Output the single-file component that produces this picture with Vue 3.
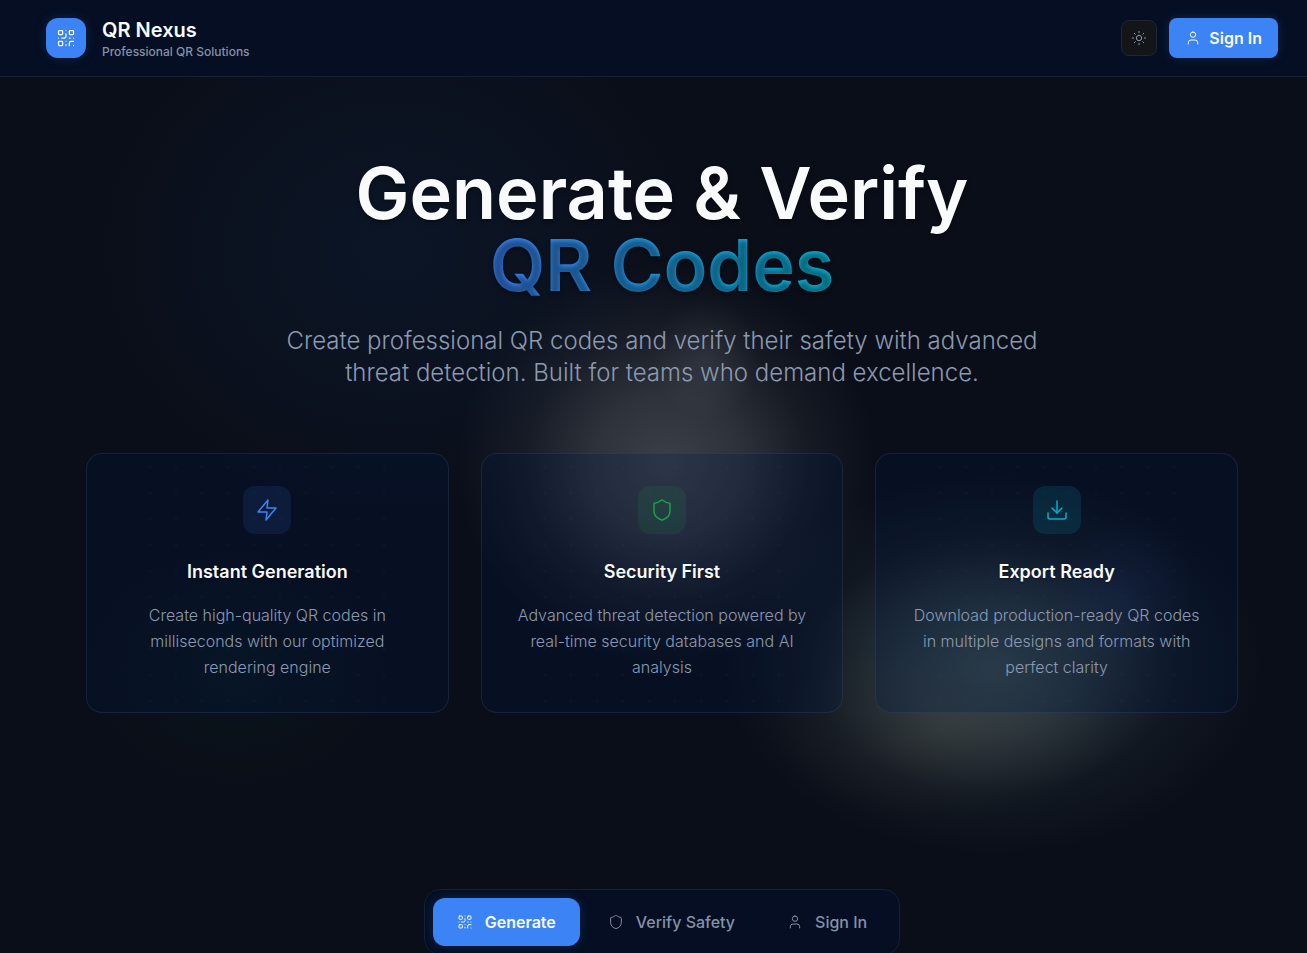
<script setup>
import { ref } from 'vue'

const active = ref('generate')

const tabs = [
  { id: 'generate', label: 'Generate', icon: 'qr' },
  { id: 'verify', label: 'Verify Safety', icon: 'shield' },
  { id: 'account', label: 'Sign In', icon: 'user' },
]

const features = [
  {
    tone: 'blue',
    icon: 'zap',
    title: 'Instant Generation',
    text: 'Create high-quality QR codes in milliseconds with our optimized rendering engine',
  },
  {
    tone: 'green',
    icon: 'shield',
    title: 'Security First',
    text: 'Advanced threat detection powered by real-time security databases and AI analysis',
  },
  {
    tone: 'cyan',
    icon: 'download',
    title: 'Export Ready',
    text: 'Download production-ready QR codes in multiple designs and formats with perfect clarity',
  },
]

const icons = {
  qr: [
    'M4 3h3a1 1 0 0 1 1 1v3a1 1 0 0 1-1 1H4a1 1 0 0 1-1-1V4a1 1 0 0 1 1-1z',
    'M17 3h3a1 1 0 0 1 1 1v3a1 1 0 0 1-1 1h-3a1 1 0 0 1-1-1V4a1 1 0 0 1 1-1z',
    'M4 16h3a1 1 0 0 1 1 1v3a1 1 0 0 1-1 1H4a1 1 0 0 1-1-1v-3a1 1 0 0 1 1-1z',
    'M21 16h-3a2 2 0 0 0-2 2v3',
    'M21 21v.01',
    'M12 7v3a2 2 0 0 1-2 2H7',
    'M3 12h.01',
    'M12 3h.01',
    'M12 16v.01',
    'M16 12h1',
    'M21 12v.01',
    'M12 21v-1',
  ],
  shield: [
    'M20 13c0 5-3.5 7.5-7.66 8.95a1 1 0 0 1-.67-.01C7.5 20.5 4 18 4 13V6a1 1 0 0 1 1-1c2 0 4.5-1.2 6.24-2.72a1.17 1.17 0 0 1 1.52 0C14.51 3.81 17 5 19 5a1 1 0 0 1 1 1z',
  ],
  user: ['M19 21v-2a4 4 0 0 0-4-4H9a4 4 0 0 0-4 4v2', 'M12 3a4 4 0 1 1 0 8a4 4 0 0 1 0-8z'],
  zap: ['M13 2L3 14h9l-1 8l10-12h-9l1-8z'],
  download: ['M21 15v4a2 2 0 0 1-2 2H5a2 2 0 0 1-2-2v-4', 'M7 10l5 5l5-5', 'M12 15V3'],
  sun: [
    'M12 8a4 4 0 1 1 0 8a4 4 0 0 1 0-8z',
    'M12 2v2',
    'M12 20v2',
    'M4.93 4.93l1.41 1.41',
    'M17.66 17.66l1.41 1.41',
    'M2 12h2',
    'M20 12h2',
    'M6.34 17.66l-1.41 1.41',
    'M19.07 4.93l-1.41 1.41',
  ],
}
</script>

<template>
  <div class="page">
    <div class="shell">
      <header class="topbar">
        <div class="topbar-inner">
          <div class="brand">
            <span class="logo">
              <svg class="icon icon-md" viewBox="0 0 24 24" aria-hidden="true">
                <path v-for="d in icons.qr" :key="d" :d="d" />
              </svg>
            </span>
            <div>
              <p class="brand-name">QR Nexus</p>
              <p class="brand-tag">Professional QR Solutions</p>
            </div>
          </div>
          <div class="actions">
            <button class="theme" type="button" aria-label="Toggle theme">
              <svg class="icon" viewBox="0 0 24 24" aria-hidden="true">
                <path v-for="d in icons.sun" :key="d" :d="d" />
              </svg>
            </button>
            <button class="signin" type="button">
              <svg class="icon" viewBox="0 0 24 24" aria-hidden="true">
                <path v-for="d in icons.user" :key="d" :d="d" />
              </svg>
              Sign In
            </button>
          </div>
        </div>
      </header>

      <main>
        <section class="hero">
          <h1>
            <span>Generate &amp; Verify</span>
            <span class="accent">QR Codes</span>
          </h1>
          <p class="lead">
            Create professional QR codes and verify their safety with advanced threat detection.
            Built for teams who demand excellence.
          </p>
          <div class="cards">
            <article v-for="f in features" :key="f.title" class="card">
              <span class="badge" :class="f.tone">
                <svg class="icon icon-lg" viewBox="0 0 24 24" aria-hidden="true">
                  <path v-for="d in icons[f.icon]" :key="d" :d="d" />
                </svg>
              </span>
              <h2>{{ f.title }}</h2>
              <p>{{ f.text }}</p>
            </article>
          </div>
        </section>

        <nav class="tabs" aria-label="Sections">
          <button
            v-for="t in tabs"
            :key="t.id"
            type="button"
            class="tab"
            :class="{ active: active === t.id }"
            @click="active = t.id"
          >
            <svg class="icon" viewBox="0 0 24 24" aria-hidden="true">
              <path v-for="d in icons[t.icon]" :key="d" :d="d" />
            </svg>
            {{ t.label }}
          </button>
        </nav>
      </main>
    </div>
  </div>
</template>

<style>
body {
  background: #0a0e18;
}
</style>

<style scoped>
.page {
  min-height: 100vh;
  overflow: hidden;
  color: #f8fafc;
  font-family: Inter, 'Liberation Sans', sans-serif;
  -webkit-font-smoothing: antialiased;
  background:
    radial-gradient(56px 60px at 54% 358px, rgba(130, 132, 150, 0.16), rgba(130, 132, 150, 0.08) 50%, transparent),
    radial-gradient(210px 200px at 51% 465px, rgba(128, 132, 138, 0.42), rgba(122, 126, 132, 0.32) 35%, rgba(110, 114, 120, 0.12) 68%, transparent),
    radial-gradient(170px 90px at 72% 730px, rgba(112, 98, 80, 0.2), rgba(100, 92, 80, 0.1) 50%, transparent),
    radial-gradient(70px 70px at 86% 592px, rgba(59, 80, 170, 0.14), rgba(59, 80, 170, 0.07) 50%, transparent),
    radial-gradient(270px 190px at 76% 665px, rgba(96, 128, 128, 0.48), rgba(90, 118, 120, 0.36) 33%, rgba(70, 92, 98, 0.12) 68%, transparent),
    radial-gradient(150px 120px at 18% 670px, rgba(6, 60, 50, 0.14), transparent),
    radial-gradient(300px 260px at 30% 250px, rgba(18, 48, 90, 0.22), rgba(18, 48, 90, 0.13) 50%, transparent),
    #0a0e18;
}

p,
h1,
h2 {
  margin: 0;
}

button {
  font-family: inherit;
  font-size: 16px;
  line-height: 24px;
  border: 0;
  cursor: pointer;
}

.shell {
  width: calc(100% + 17px);
}

.icon {
  flex: none;
  width: 16px;
  height: 16px;
  fill: none;
  stroke: currentColor;
  stroke-width: 1.5;
  stroke-linecap: round;
  stroke-linejoin: round;
}

.icon-md {
  width: 20px;
  height: 20px;
}

.icon-lg {
  width: 24px;
  height: 24px;
}

.topbar {
  background: #050e22;
  border-bottom: 1px solid #182234;
}

.topbar-inner {
  display: flex;
  align-items: center;
  justify-content: space-between;
  max-width: 1232px;
  margin: 0 auto;
  padding: 16px 24px;
}

.brand,
.actions {
  display: flex;
  align-items: center;
}

.brand {
  gap: 16px;
}

.actions {
  gap: 12px;
}

.logo {
  display: grid;
  place-items: center;
  width: 40px;
  height: 40px;
  border-radius: 12px;
  background: #3c83f6;
  box-shadow: 0 0 12px rgba(60, 131, 246, 0.2);
}

.brand-name {
  font-size: 20px;
  line-height: 28px;
  font-weight: 600;
}

.brand-tag {
  font-size: 12px;
  line-height: 16px;
  font-weight: 500;
  color: #8492a8;
}

.theme {
  display: grid;
  place-items: center;
  width: 36px;
  height: 36px;
  padding: 0;
  border: 1px solid #1c2737;
  border-radius: 8px;
  background: #131518;
  color: #8b98ab;
}

.signin {
  display: flex;
  align-items: center;
  gap: 8px;
  padding: 8px 16px;
  border-radius: 8px;
  background: #3c83f6;
  color: #f8fafc;
  font-weight: 600;
  box-shadow: 0 0 12px rgba(60, 131, 246, 0.2);
}

.hero {
  display: flex;
  flex-direction: column;
  align-items: center;
  padding: 80px 24px 96px;
  text-align: center;
}

h1 {
  display: flex;
  flex-direction: column;
  align-items: center;
  font-size: 72px;
  line-height: 72px;
  font-weight: 600;
  text-shadow: 0 2px 4px rgba(0, 0, 0, 0.4);
}

.accent {
  background: linear-gradient(90deg, #3b82f6, #06b6d4);
  background-clip: text;
  -webkit-background-clip: text;
  color: transparent;
}

.lead {
  max-width: 768px;
  margin-top: 24px;
  font-size: 24px;
  line-height: 32px;
  font-weight: 300;
  color: #8c9ab0;
}

.cards {
  display: grid;
  grid-template-columns: repeat(3, minmax(0, 1fr));
  gap: 32px;
  width: 100%;
  max-width: 1152px;
  margin-top: 64px;
}

.card {
  position: relative;
  display: flex;
  flex-direction: column;
  align-items: center;
  padding: 32px;
  border: 1px solid rgba(70, 88, 122, 0.26);
  border-radius: 16px;
  background: rgba(0, 24, 72, 0.24);
}

.card::before {
  content: '';
  position: absolute;
  inset: 0;
  width: 260px;
  margin: 0 auto;
  background: radial-gradient(circle, rgba(60, 131, 246, 0.04) 1px, transparent 2px) 0 0 / 26px 26px;
  pointer-events: none;
}

.badge {
  display: grid;
  place-items: center;
  width: 48px;
  height: 48px;
  border-radius: 12px;
}

.blue {
  color: #3c83f6;
  background: rgba(60, 131, 246, 0.11);
}

.green {
  color: #16a34a;
  background: rgba(22, 163, 74, 0.12);
}

.cyan {
  color: #06aecb;
  background: rgba(6, 182, 212, 0.13);
}

h2 {
  margin-top: 24px;
  font-size: 18px;
  line-height: 28px;
  font-weight: 600;
  text-shadow: 0 1px 2px rgba(0, 0, 0, 0.4);
}

.card p {
  margin-top: 16px;
  font-size: 16px;
  line-height: 26px;
  font-weight: 300;
  color: #8c9ab0;
}

.tabs {
  display: flex;
  gap: 4px;
  width: fit-content;
  margin: 80px auto 0;
  padding: 8px;
  border: 1px solid #152033;
  border-radius: 16px;
  background: #050e22;
}

.tab {
  display: flex;
  align-items: center;
  gap: 12px;
  padding: 12px 24px;
  border-radius: 12px;
  background: transparent;
  color: #8492a8;
  font-weight: 500;
}

.tab.active {
  background: #3c83f6;
  color: #f8fafc;
  font-weight: 600;
  box-shadow: 0 0 12px rgba(60, 131, 246, 0.2);
}
</style>
